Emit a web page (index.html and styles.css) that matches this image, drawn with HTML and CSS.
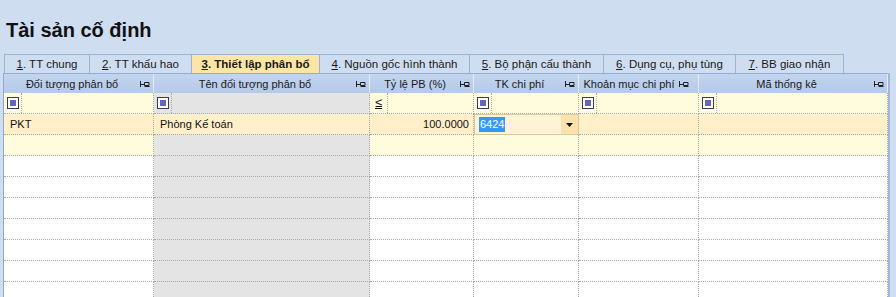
FILE: index.html
```html
<!DOCTYPE html>
<html lang="vi">
<head>
  <meta charset="UTF-8">
  <title>Tài sản cố định</title>
  <link rel="stylesheet" href="styles.css">
</head>
<body>
  <h1 class="title">Tài sản cố định</h1>

  <div class="tabs">
    <div class="tab tab-1"><u>1</u>. TT chung</div>
    <div class="tab tab-2"><u>2</u>. TT khấu hao</div>
    <div class="tab tab-3 active"><u>3</u>. Thiết lập phân bổ</div>
    <div class="tab tab-4"><u>4</u>. Nguồn gốc hình thành</div>
    <div class="tab tab-5"><u>5</u>. Bộ phận cấu thành</div>
    <div class="tab tab-6"><u>6</u>. Dụng cụ, phụ tùng</div>
    <div class="tab tab-7"><u>7</u>. BB giao nhận</div>
  </div>

  <div class="grid">
    <div class="row head">
      <div class="hcell"><span>Đối tượng phân bổ</span><svg class="pin" width="10" height="8" viewBox="0 0 10 8"><path d="M0.5 1v6M0 4.5h4M4.5 2.5h4.5v3h-4.5zM4.5 6.5h5" fill="none" stroke="#222" stroke-width="1"/></svg></div>
      <div class="hcell"><span>Tên đối tượng phân bổ</span><svg class="pin" width="10" height="8" viewBox="0 0 10 8"><path d="M0.5 1v6M0 4.5h4M4.5 2.5h4.5v3h-4.5zM4.5 6.5h5" fill="none" stroke="#222" stroke-width="1"/></svg></div>
      <div class="hcell"><span>Tỷ lệ PB (%)</span><svg class="pin" width="10" height="8" viewBox="0 0 10 8"><path d="M0.5 1v6M0 4.5h4M4.5 2.5h4.5v3h-4.5zM4.5 6.5h5" fill="none" stroke="#222" stroke-width="1"/></svg></div>
      <div class="hcell"><span>TK chi phí</span><svg class="pin" width="10" height="8" viewBox="0 0 10 8"><path d="M0.5 1v6M0 4.5h4M4.5 2.5h4.5v3h-4.5zM4.5 6.5h5" fill="none" stroke="#222" stroke-width="1"/></svg></div>
      <div class="hcell hcell-wide"><span>Khoản mục chi phí</span><svg class="pin" width="10" height="8" viewBox="0 0 10 8"><path d="M0.5 1v6M0 4.5h4M4.5 2.5h4.5v3h-4.5zM4.5 6.5h5" fill="none" stroke="#222" stroke-width="1"/></svg></div>
      <div class="hcell"><span>Mã thống kê</span><svg class="pin" width="10" height="8" viewBox="0 0 10 8"><path d="M0.5 1v6M0 4.5h4M4.5 2.5h4.5v3h-4.5zM4.5 6.5h5" fill="none" stroke="#222" stroke-width="1"/></svg></div>
    </div>

    <div class="row filter">
      <div class="cell"><span class="op"><i class="chk"></i></span></div>
      <div class="cell grey"><span class="op"><i class="chk"></i></span></div>
      <div class="cell"><span class="op op-le">≤</span></div>
      <div class="cell"><span class="op"><i class="chk"></i></span></div>
      <div class="cell"><span class="op"><i class="chk"></i></span></div>
      <div class="cell"><span class="op"><i class="chk"></i></span></div>
    </div>

    <div class="row data">
      <div class="cell">PKT</div>
      <div class="cell">Phòng Kế toán</div>
      <div class="cell num">100.0000</div>
      <div class="cell editor"><span class="sel">6424</span><span class="drop"><svg width="7" height="4" viewBox="0 0 7 4"><path d="M0 0h7L3.5 4z" fill="#111"/></svg></span></div>
      <div class="cell"></div>
      <div class="cell"></div>
    </div>

    <div class="row newrow">
      <div class="cell"></div><div class="cell grey"></div><div class="cell"></div><div class="cell"></div><div class="cell"></div><div class="cell"></div>
    </div>
    <div class="row">
      <div class="cell"></div><div class="cell grey"></div><div class="cell"></div><div class="cell"></div><div class="cell"></div><div class="cell"></div>
    </div>
    <div class="row">
      <div class="cell"></div><div class="cell grey"></div><div class="cell"></div><div class="cell"></div><div class="cell"></div><div class="cell"></div>
    </div>
    <div class="row">
      <div class="cell"></div><div class="cell grey"></div><div class="cell"></div><div class="cell"></div><div class="cell"></div><div class="cell"></div>
    </div>
    <div class="row">
      <div class="cell"></div><div class="cell grey"></div><div class="cell"></div><div class="cell"></div><div class="cell"></div><div class="cell"></div>
    </div>
    <div class="row">
      <div class="cell"></div><div class="cell grey"></div><div class="cell"></div><div class="cell"></div><div class="cell"></div><div class="cell"></div>
    </div>
    <div class="row">
      <div class="cell"></div><div class="cell grey"></div><div class="cell"></div><div class="cell"></div><div class="cell"></div><div class="cell"></div>
    </div>
    <div class="row">
      <div class="cell"></div><div class="cell grey"></div><div class="cell"></div><div class="cell"></div><div class="cell"></div><div class="cell"></div>
    </div>
  </div>
</body>
</html>
```
FILE: styles.css
```css
body {
  margin: 0;
  background: #cfddf1;
  font-family: "Liberation Sans", Arial, sans-serif;
  font-size: 11px;
  color: #111;
  overflow: hidden;
}
.title {
  margin: 0;
  padding: 18px 0 0 6px;
  height: 36px;
  font-size: 20px;
  font-weight: bold;
  line-height: 24px;
  color: #111;
}
.tabs {
  display: flex;
  margin-left: 4px;
  height: 19px;
  font-size: 11.5px;
}
.tab {
  box-sizing: border-box;
  height: 19px;
  line-height: 18px;
  text-align: center;
  border: 1px solid #9cb3d6;
  border-bottom: none;
  border-left: none;
  color: #1a1a1a;
  white-space: nowrap;
}
.tab-1 { width: 86px; border-left: 1px solid #9cb3d6; }
.tab-2 { width: 102px; }
.tab-3 { width: 128px; }
.tab-4 { width: 150px; }
.tab-5 { width: 134px; }
.tab-6 { width: 132px; }
.tab-7 { width: 108px; }
.tab.active {
  background: #fde6a4;
  font-weight: bold;
}
.grid {
  margin-left: 3px;
  width: 884px;
  border-left: 1px solid #8fa9cf;
  border-right: 2px solid #9fb8dc;
  background: #fff;
}
.row {
  display: grid;
  grid-template-columns: 150px 216px 104px 105px 120px 189px;
  grid-template-rows: 21px;
  height: 21px;
}
.head {
  grid-template-rows: 19px;
  height: 20px;
  background: linear-gradient(#c3d5ee, #b4cae8);
  border-top: 1px solid #93acd2;
  box-sizing: border-box;
}
.hcell {
  display: flex;
  align-items: center;
  border-right: 1px solid #e2ebf7;
  color: #1a1a1a;
  white-space: nowrap;
  overflow: hidden;
}
.hcell span {
  flex: 1;
  text-align: center;
}
.pin {
  margin-right: 3px;
  flex: none;
}
.hcell-wide .pin {
  margin-right: 9px;
}
.cell {
  box-sizing: border-box;
  height: 21px;
  line-height: 20px;
  padding: 0 6px;
  border-right: 1px dotted #a9a9a9;
  border-bottom: 1px dotted #a9a9a9;
  white-space: nowrap;
}
.grey {
  background: #e4e4e4;
}
.filter .cell {
  padding: 0;
  background: #fffcde;
}
.filter .cell.grey {
  background: #e4e4e4;
}
.op {
  display: inline-flex;
  align-items: center;
  justify-content: center;
  width: 18px;
  height: 20px;
  border-right: 1px dotted #a9a9a9;
  box-sizing: border-box;
  vertical-align: top;
}
.op-le {
  font-size: 13px;
  text-decoration: underline;
}
.chk {
  display: block;
  box-sizing: border-box;
  width: 12px;
  height: 12px;
  border: 1px solid #3a3a50;
  background: #fff;
  padding: 2px;
}
.chk::before {
  content: "";
  display: block;
  width: 6px;
  height: 6px;
  background: #6464c8;
}
.data .cell {
  background: #fff0c9;
}
.num {
  text-align: right;
  padding-right: 4px;
}
.data .editor {
  display: flex;
  align-items: center;
  padding: 0 0 0 4px;
  border: 1px solid #d9caa0;
  background: #fff3d6;
}
.sel {
  background: #3399ff;
  color: #fff;
  line-height: 15px;
  padding: 0 1px;
}
.drop {
  margin-left: auto;
  width: 17px;
  height: 19px;
  display: flex;
  align-items: center;
  justify-content: center;
  background: #fbe2ad;
}
.newrow .cell {
  background: #fffcde;
}
.newrow .cell.grey {
  background: #e4e4e4;
}
```
